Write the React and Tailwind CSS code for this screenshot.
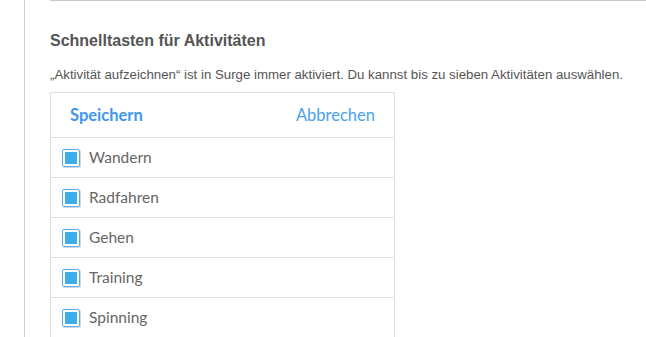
const activities = ['Wandern', 'Radfahren', 'Gehen', 'Training', 'Spinning'];

function Checkbox() {
  return (
    <span className="flex h-[18px] w-[18px] shrink-0 items-center justify-center rounded-[2px] border border-[#5aafe8] bg-white p-[2px] shadow-[1px_1px_0_#d8d8d8]">
      <span className="h-full w-full bg-[#3daeea]" />
    </span>
  );
}

export default function App() {
  return (
    <div className="flex h-[337px] w-full overflow-hidden bg-white font-['Liberation_Sans',Arial,sans-serif]">
      <div className="w-6 shrink-0" />
      <div className="flex-1 border-l border-[#cfcfcf] pl-[25px]">
        <div className="border-t border-[#c8c8c8]" />
        <h2 className="mt-[31px] text-[16px] font-bold leading-[18px] text-[#555]">
          Schnelltasten für Aktivitäten
        </h2>
        <p className="mt-[17px] text-[13.25px] leading-[16px] text-[#555]">
          „Aktivität aufzeichnen“ ist in Surge immer aktiviert. Du kannst bis zu sieben Aktivitäten auswählen.
        </p>
        <div className="mt-[9px] w-[345px] border border-b-0 border-[#e1e1e1] font-['Lato','Noto_Sans',sans-serif]">
          <div className="flex h-[45px] items-center justify-between border-b border-[#e1e1e1] pl-[19px] pr-[19px]">
            <button className="text-[16.5px] font-bold text-[#3f98ec]">Speichern</button>
            <button className="text-[16.5px] text-[#4aa0ec]">Abbrechen</button>
          </div>
          {activities.map((name) => (
            <div
              key={name}
              className="flex h-10 items-center gap-[9px] border-b border-[#e1e1e1] pl-[11px]"
            >
              <Checkbox />
              <span className="text-[15.5px] text-[#666]">{name}</span>
            </div>
          ))}
        </div>
      </div>
    </div>
  );
}
